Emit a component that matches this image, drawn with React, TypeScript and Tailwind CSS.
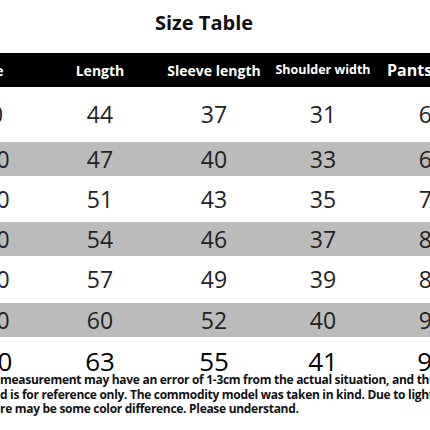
const headers = ["Size", "Length", "Sleeve length", "Shoulder width", "Pants length"]

const rows = [
  { cells: ["90", "44", "37", "31", "65"], h: "h-[55px]", gray: false },
  { cells: ["100", "47", "40", "33", "68"], h: "h-[34px]", gray: true },
  { cells: ["110", "51", "43", "35", "74"], h: "h-[46px]", gray: false },
  { cells: ["120", "54", "46", "37", "80"], h: "h-[34px]", gray: true },
  { cells: ["130", "57", "49", "39", "86"], h: "h-[47px]", gray: false },
  { cells: ["140", "60", "52", "40", "92"], h: "h-[34px]", gray: true },
  { cells: ["150", "63", "55", "41", "96"], h: "h-[48px]", gray: false, last: true },
]

const cols = "grid grid-cols-[110px_110px_118px_100px_118px] ml-[-65px] w-[556px]"

export default function App() {
  return (
    <div className="w-[430px] h-[430px] overflow-hidden bg-white relative" style={{ fontFamily: "'Open Sans', 'Noto Sans', sans-serif" }}>
      {/* Title */}
      <div className="h-[53px] flex items-center justify-center pb-[8px]">
        <h1 className="text-[20px] font-bold text-[#111] ml-[-22px]">Size Table</h1>
      </div>

      {/* Header */}
      <div className="bg-black h-[34px]">
        <div className={`${cols} h-full items-center`}>
          {headers.map((t, i) => (
            <div
              key={t}
              className={`text-white font-bold text-center whitespace-nowrap ${
                i === 3
                  ? "text-[12.5px]"
                  : i === 4
                  ? "text-[16px] pl-[14px] text-left"
                  : "text-[14px]"
              }`}
            >
              {t}
            </div>
          ))}
        </div>
      </div>

      {/* Rows */}
      {rows.map((r, ri) => (
        <div key={ri} className={`${r.h} ${r.gray ? "bg-[#bcbcbc]" : "bg-white"}`}>
          <div className={`${cols} h-full items-center`}>
            {r.cells.map((c, ci) => (
              <div
                key={ci}
                className={`text-center leading-none ${
                  r.last ? "text-[26px] text-black" : "text-[23px] text-[#222]"
                }`}
              >
                {c}
              </div>
            ))}
          </div>
        </div>
      ))}

      {/* Footnote */}
      <div className="mt-[-12px] relative text-[12px] font-bold text-[#111] leading-[14.5px] tracking-[-0.3px] whitespace-nowrap">
        <div>measurement may have an error of 1-3cm from the actual situation, and the</div>
        <div>d is for reference only. The commodity model was taken in kind. Due to light</div>
        <div>re may be some color difference. Please understand.</div>
      </div>
    </div>
  )
}
